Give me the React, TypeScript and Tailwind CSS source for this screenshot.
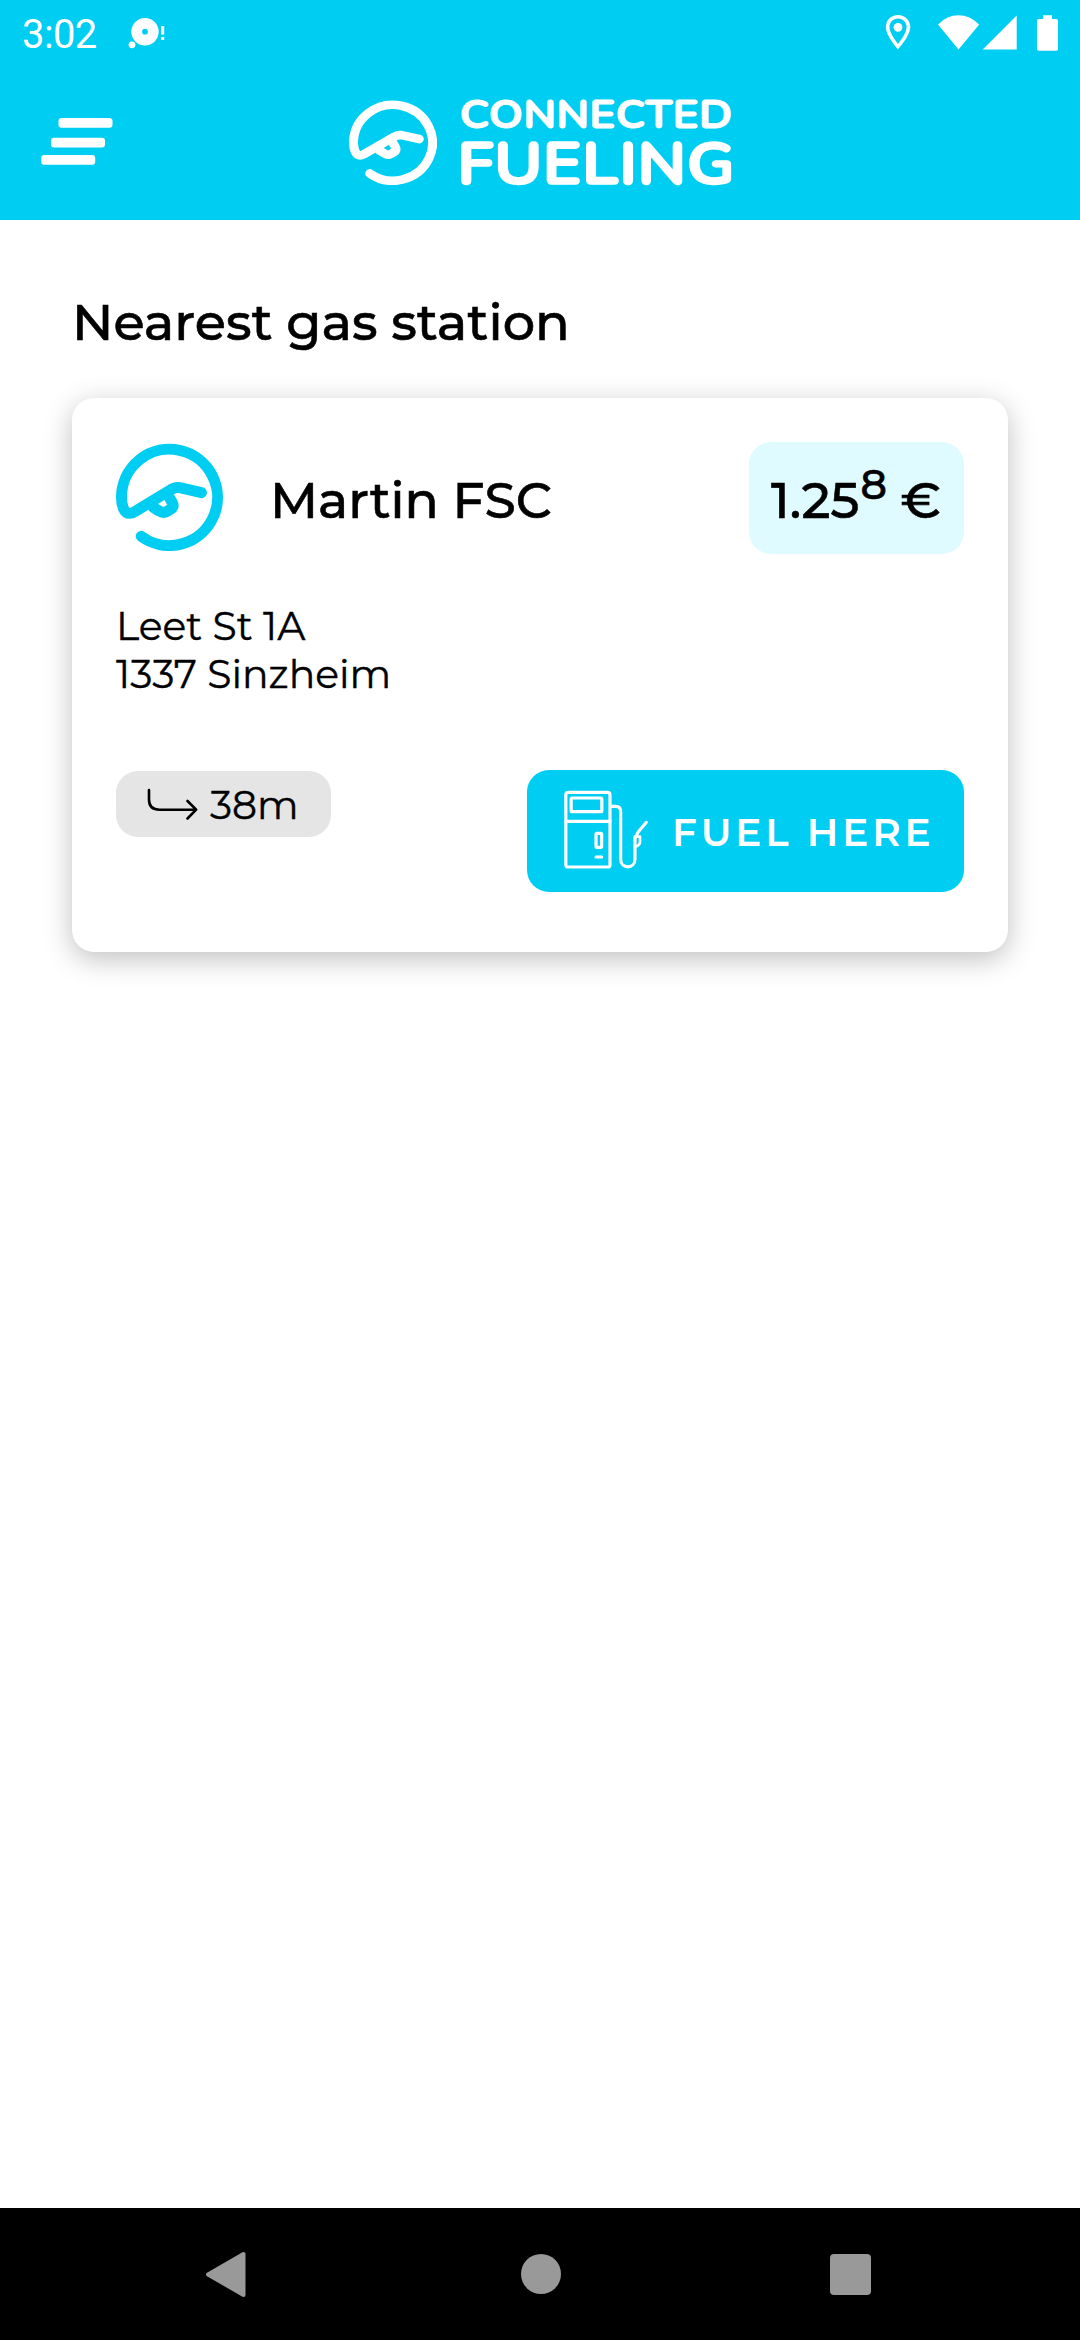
function HandMark({ color, className }: { color: string; className: string }) {
  return (
    <svg viewBox="48 39 322 324" preserveAspectRatio="none" className={className} fill="none" stroke={color} strokeWidth="33" strokeLinecap="round" strokeLinejoin="round">
      <path d="M124 319A144.5 144.5 0 1 0 64.5 201C64.5 224 70 250 90 250Q97 250 104 245L212 180Q224 171 240 173L305 188" />
      <path d="M160 232L178 243Q190 251 202 244L212 238Q224 231 218 219L205 196" />
    </svg>
  );
}

function StatusBar() {
  return (
    <div className="flex h-[66px] items-center px-[22px] text-white">
      <div className="mt-[3px] w-[105px] font-['Roboto',sans-serif] text-[40px] leading-none tracking-[-0.6px]">3:02</div>
      <svg className="h-[34px] w-[40px]" viewBox="127 16 40 34" fill="#fff">
        <path fillRule="evenodd" d="M145 18a13.7 13.7 0 1 0 0 27.4a13.7 13.7 0 1 0 0-27.4zm0 10.8a2.9 2.9 0 1 1 0 5.8a2.9 2.9 0 1 1 0-5.8z" />
        <circle cx="132" cy="44.8" r="3.4" />
        <path d="M161 26h3.2v8.5h-3.2zM161 37h3.2v3h-3.2z" />
      </svg>
      <svg className="ml-auto h-[40px] w-[176px]" viewBox="882 13 176 40" fill="#fff">
        <path fillRule="evenodd" d="M898 15c-6.9 0-12.2 5.4-12.2 12.1C885.8 36 898 49.4 898 49.4S910.3 36 910.3 27.1C910.3 20.4 904.9 15 898 15zm0 3.600c4.900 0 8.600 3.800 8.600 8.500 0 5.200-5 12.500-8.600 16.800-3.600-4.300-8.500-11.600-8.500-16.800 0-4.700 3.700-8.500 8.500-8.500z" />
        <circle cx="898" cy="27.3" r="4.4" />
        <path d="M958.5 49.4L938 24.4Q947 15.2 958.5 15.2T979.2 24.4zM1016.7 15.5V49.4H982.7zM1043 15.2h9v3.800h4.300q1.700 0 1.700 1.700v28.300q0 1.700-1.700 1.700h-17.600q-1.700 0-1.700-1.700V20.700q0-1.700 1.700-1.700h4.300z" />
      </svg>
    </div>
  );
}

function AppBar() {
  return (
    <div className="flex h-[154px] items-start pl-[41px]">
      <svg className="mt-[51px] h-[50px] w-[74px]" viewBox="41 117 74 50" fill="#fff">
        <rect x="58.5" y="118" width="54" height="9.7" rx="3" />
        <rect x="51" y="137.7" width="54" height="9.7" rx="3" />
        <rect x="41.2" y="155" width="54" height="9.7" rx="3" />
      </svg>
      <HandMark color="#fff" className="ml-[234px] mt-[34px] h-[85px] w-[88px]" />
      <svg className="ml-[19px] mt-[9px] h-[136px] w-[284px]" viewBox="456 75 284 136" fill="#fff" stroke="#fff" strokeLinejoin="round" fontFamily="Nunito, Montserrat, sans-serif" fontWeight="700">
        <text x="459.5" y="128.4" fontSize="40" strokeWidth="0.8" textLength="273" lengthAdjust="spacingAndGlyphs">CONNECTED</text>
        <text x="457" y="184.2" fontSize="60.5" strokeWidth="1.5" textLength="278" lengthAdjust="spacingAndGlyphs">FUELING</text>
      </svg>
    </div>
  );
}

function PumpIcon() {
  return (
    <svg className="-mt-[2px] h-[80px] w-[86px]" viewBox="71 60 258 240" fill="none" stroke="#fff" strokeWidth="9.5" strokeLinecap="round" strokeLinejoin="round">
      <rect x="76.5" y="67" width="132.5" height="224" rx="7" />
      <rect x="92.5" y="84" width="92" height="41" rx="3" />
      <path d="M77 154H209M167 261H184M212 109H226Q241 109 241 124V268C241 298 284 298 284 268V200M318 157L296 183Q289 191 288 200" />
      <rect x="167" y="190" width="17" height="42" rx="3" />
      <path d="M286 200H299V215Q299 226 286 229" strokeWidth="8" />
    </svg>
  );
}

function StationCard() {
  return (
    <section className="flex h-[554px] flex-col rounded-[22px] bg-white p-[44px] shadow-[0_7px_28px_rgba(0,0,0,0.25)]">
      <div className="flex h-[112px] items-center">
        <HandMark color="#00cdf2" className="-mt-[3px] h-[108px] w-[107px]" />
        <h2 className="ml-[47px] mt-[4px] text-[50.4px] font-medium leading-none [-webkit-text-stroke:0.6px_#000]">Martin FSC</h2>
        <div className="ml-auto flex h-[112px] w-[215px] items-center rounded-[22px] bg-[#e0fbff] pl-[22px]">
          <div className="mt-[4px] flex items-baseline whitespace-pre text-[50.4px] font-medium leading-none [-webkit-text-stroke:0.6px_#000]">
            1.25<span className="relative -top-[19px] ml-px text-[41px] leading-none">8</span> €
          </div>
        </div>
      </div>
      <address className="mt-[48px] text-[39.3px] not-italic leading-[48px] [-webkit-text-stroke:0.4px_#000]">
        Leet St 1A
        <br />
        1337 Sinzheim
      </address>
      <div className="mt-[72px] flex items-start justify-between">
        <div className="mt-px flex h-[66px] w-[215px] items-center rounded-[22px] bg-[#e5e5e5] pl-[30px]">
          <svg className="-mt-px h-[34px] w-[54px]" viewBox="146 787 54 34" fill="none" stroke="#000" strokeWidth="2.6" strokeLinecap="round" strokeLinejoin="round">
            <path d="M149 790V799.5Q149 809.7 159.5 809.7H196M187.5 801L196.2 809.7L187.5 818.5" />
          </svg>
          <span className="ml-[10px] mt-[3px] text-[39.2px] leading-none [-webkit-text-stroke:0.4px_#000]">38m</span>
        </div>
        <button className="flex h-[122px] w-[437px] items-center rounded-[22px] bg-[#00cdf2] pl-[37px] text-white">
          <PumpIcon />
          <span className="ml-[22px] mt-[2px] whitespace-nowrap text-[39px] font-semibold leading-none tracking-[3.8px]">FUEL HERE</span>
        </button>
      </div>
    </section>
  );
}

export default function App() {
  return (
    <div className="flex h-[2340px] w-[1080px] flex-col bg-white font-['Montserrat','Inter',sans-serif] text-black">
      <header className="h-[220px] bg-[#00cdf2]">
        <StatusBar />
        <AppBar />
      </header>
      <main className="flex-1 px-[72px] pt-[77px]">
        <h1 className="mb-[50px] text-[51px] font-medium leading-[51px] [-webkit-text-stroke:0.6px_#000]">Nearest gas station</h1>
        <StationCard />
      </main>
      <nav className="flex h-[132px] items-center justify-between bg-black px-[204px]">
        <svg className="h-[48px] w-[44px]" viewBox="0 0 44 48" fill="#999" stroke="#999" strokeWidth="4" strokeLinejoin="round">
          <path d="M4 24.5L39.5 4V45z" />
        </svg>
        <div className="ml-[3px] size-[40px] rounded-full bg-[#999]" />
        <div className="mr-[5px] size-[41px] rounded-[4px] bg-[#999]" />
      </nav>
    </div>
  );
}
